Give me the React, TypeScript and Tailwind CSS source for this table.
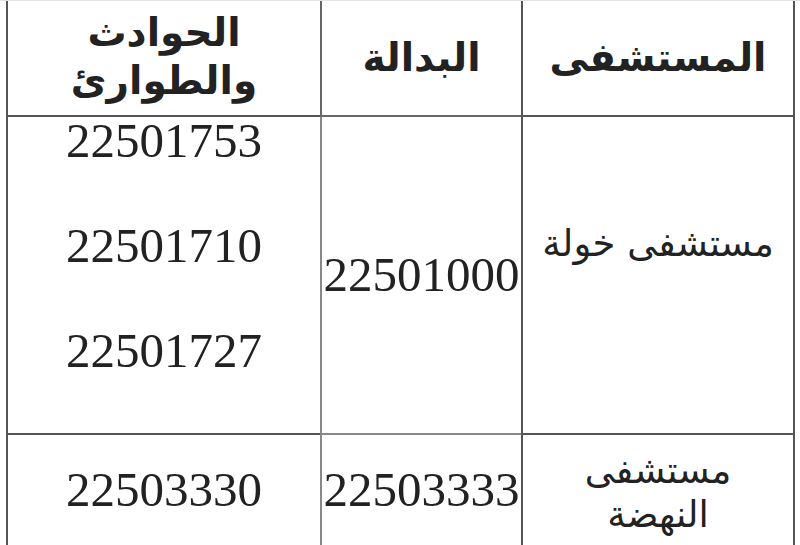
import React from "react";

type Row = {
  hospital: string[];
  main: string;
  emergency: string[];
  height: string;
};

const rows: Row[] = [
  {
    hospital: ["مستشفى خولة"],
    main: "22501000",
    emergency: ["22501753", "22501710", "22501727"],
    height: "h-[318px]",
  },
  {
    hospital: ["مستشفى", "النهضة"],
    main: "22503333",
    emergency: ["22503330"],
    height: "h-[112px]",
  },
];

const num = "font-['Liberation_Serif',serif] text-[49px] leading-[48px] text-[#222]";
const arabic = "font-['DejaVu_Sans',sans-serif] text-[#222]";

export default function App() {
  return (
    <div className="w-[800px] h-[545px] overflow-hidden bg-white border-t border-[#e4e4e4]">
      <div className="pl-[6px]">
        <table dir="rtl" className="w-[789px] table-fixed border-collapse">
          <colgroup>
            <col className="w-[272px]" />
            <col className="w-[201px]" />
            <col />
          </colgroup>
          <thead>
            <tr className="h-[115px]">
              <th className="border-2 border-t-0 border-[#555] align-middle">
                <span className={`${arabic} text-[39px] font-bold`}>المستشفى</span>
              </th>
              <th className="border-2 border-t-0 border-[#666] align-middle">
                <span className={`${arabic} text-[39px] font-bold`}>البدالة</span>
              </th>
              <th className="border-2 border-t-0 border-[#555] align-middle">
                <div className={`${arabic} text-[39px] font-bold leading-[48px] -mt-[3px]`}>
                  الحوادث
                  <br />
                  والطوارئ
                </div>
              </th>
            </tr>
          </thead>
          <tbody>
            {rows.map((row) => (
              <tr key={row.main} className={row.height}>
                <td className="border-2 border-[#555] align-middle text-center">
                  <div
                    className={`${arabic} text-[37px] leading-[44px] ${
                      row.hospital.length === 1 ? "pb-[62px]" : "pt-[6px]"
                    }`}
                  >
                    {row.hospital.map((line) => (
                      <div key={line}>{line}</div>
                    ))}
                  </div>
                </td>
                <td className="border-2 border-[#888] align-middle text-center">
                  <div className={num}>{row.main}</div>
                </td>
                <td
                  className={`border-2 border-[#555] text-center ${
                    row.emergency.length > 1 ? "align-top pt-0" : "align-middle"
                  }`}
                >
                  <div className="flex flex-col items-center gap-[57px]">
                    {row.emergency.map((n) => (
                      <div key={n} className={num}>
                        {n}
                      </div>
                    ))}
                  </div>
                </td>
              </tr>
            ))}
          </tbody>
        </table>
      </div>
    </div>
  );
}
